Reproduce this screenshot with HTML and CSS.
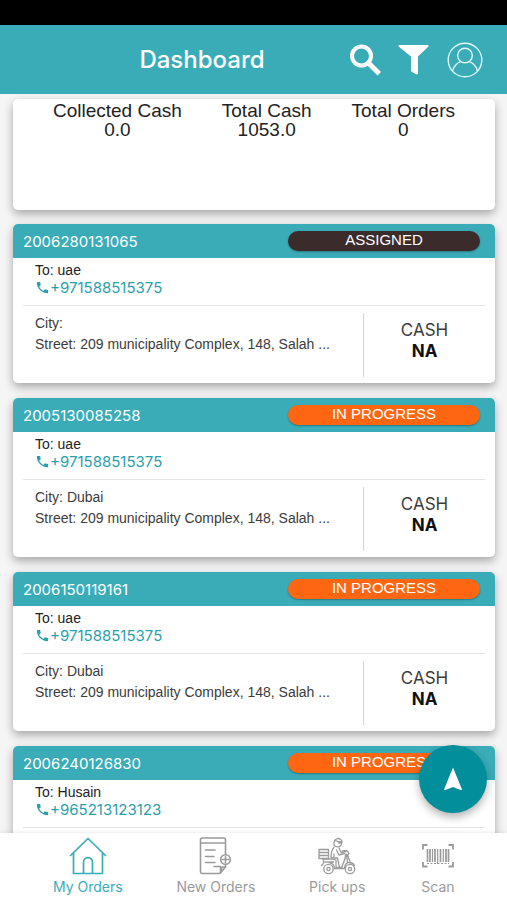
FILE: index.html
```html
<!DOCTYPE html>
<html lang="en">
    <head>
        <meta charset="utf-8">
        <meta name="viewport" content="width=device-width, initial-scale=1">
        <title>Dashboard</title>
        <link rel="stylesheet" href="styles.css">
    </head>
    <body>
        <svg class="symbols" aria-hidden="true">
            <symbol id="phone" viewBox="0 0 24 24">
                <path fill="currentColor" d="M6.6 10.8c1.4 2.8 3.8 5.1 6.6 6.6l2.2-2.2c.3-.3.7-.4 1-.2 1.1.4 2.3.6 3.6.6.6 0 1 .4 1 1V20c0 .6-.4 1-1 1C10.600 21 3 13.400 3 4c0-.6.4-1 1-1h3.500c.6 0 1 .4 1 1 0 1.200.2 2.400.6 3.600.1.300 0 .700-.200 1z"/>
            </symbol>
        </svg>
        <div class="statusBar"></div>
        <header class="topBar">
            <h1 class="title">Dashboard</h1>
            <div class="actions">
                <button type="button" class="iconButton" aria-label="Search">
                    <svg width="32" height="32" viewBox="0 0 32 32" fill="none" stroke="#fff">
                        <circle cx="12.500" cy="12" r="9.500" stroke-width="4"/>
                        <path d="M19.500 19l9 9" stroke-width="5" stroke-linecap="square"/>
                    </svg>
                </button>
                <button type="button" class="iconButton" aria-label="Filter">
                    <svg width="32" height="32" viewBox="0 0 32 32">
                        <path fill="#fff" d="M1.500 1h28c1.200 0 1.500 1 .7 1.800L20 12.500v16.500c0 1.200-.8 1.800-1.800 1.300l-4.500-2.600c-.5-.3-.7-.7-.7-1.200v-14L.8 2.800c-.8-.8-.5-1.800.7-1.800z"/>
                    </svg>
                </button>
                <button type="button" class="iconButton" aria-label="Profile">
                    <svg width="36" height="36" viewBox="0 0 36 36" fill="none" stroke="#dffbff" stroke-width="1.400">
                        <circle cx="18" cy="18" r="16.800"/>
                        <circle cx="18" cy="13.500" r="7.300"/>
                        <path d="M5.500 29C7 23 11.500 20 14 19.600M22 19.600C24.500 20 29 23 30.500 29"/>
                    </svg>
                </button>
            </div>
        </header>
        <div class="content">
            <main class="scroller">
                <section class="card summary">
                    <div>Collected Cash<br>0.0</div>
                    <div>Total Cash<br>1053.0</div>
                    <div>Total Orders<br>0</div>
                </section>
                <article class="card order">
                    <div class="orderHeader">
                        <span>2006280131065</span>
                        <span class="status assigned">ASSIGNED</span>
                    </div>
                    <div class="contact">
                        <div>To: uae</div>
                        <a class="phone" href="tel:+971588515375"><svg width="15" height="15"><use href="#phone"/></svg>+971588515375</a>
                    </div>
                    <div class="details">
                        <div class="address">
                            <div>City:</div>
                            <div>Street: 209 municipality Complex, 148, Salah ...</div>
                        </div>
                        <div class="payment">CASH<br><b>NA</b></div>
                    </div>
                </article>
                <article class="card order">
                    <div class="orderHeader">
                        <span>2005130085258</span>
                        <span class="status">IN PROGRESS</span>
                    </div>
                    <div class="contact">
                        <div>To: uae</div>
                        <a class="phone" href="tel:+971588515375"><svg width="15" height="15"><use href="#phone"/></svg>+971588515375</a>
                    </div>
                    <div class="details">
                        <div class="address">
                            <div>City: Dubai</div>
                            <div>Street: 209 municipality Complex, 148, Salah ...</div>
                        </div>
                        <div class="payment">CASH<br><b>NA</b></div>
                    </div>
                </article>
                <article class="card order">
                    <div class="orderHeader">
                        <span>2006150119161</span>
                        <span class="status">IN PROGRESS</span>
                    </div>
                    <div class="contact">
                        <div>To: uae</div>
                        <a class="phone" href="tel:+971588515375"><svg width="15" height="15"><use href="#phone"/></svg>+971588515375</a>
                    </div>
                    <div class="details">
                        <div class="address">
                            <div>City: Dubai</div>
                            <div>Street: 209 municipality Complex, 148, Salah ...</div>
                        </div>
                        <div class="payment">CASH<br><b>NA</b></div>
                    </div>
                </article>
                <article class="card order">
                    <div class="orderHeader">
                        <span>2006240126830</span>
                        <span class="status">IN PROGRESS</span>
                    </div>
                    <div class="contact">
                        <div>To: Husain</div>
                        <a class="phone" href="tel:+965213123123"><svg width="15" height="15"><use href="#phone"/></svg>+965213123123</a>
                    </div>
                    <div class="details"></div>
                </article>
            </main>
            <button type="button" class="fab" aria-label="Navigate">
                <svg width="20" height="24" viewBox="0 0 20 24">
                    <path fill="#fff" d="M10 .5l9 22-.8.800L10 20l-8.200 3.300-.8-.800z"/>
                </svg>
            </button>
        </div>
        <nav class="tabs">
            <a href="#" class="tab active">
                <svg width="38" height="38" viewBox="0 0 38 38" fill="none" stroke="currentColor" stroke-width="1.700" stroke-linejoin="round" stroke-linecap="round">
                    <path d="M1.500 18.500L19 1.500l17.500 17M4.500 16v20.500h29V16M14.500 36.500V25.500c0-6.500 9-6.500 9 0v11"/>
                </svg>
                My Orders
            </a>
            <a href="#" class="tab">
                <svg width="38" height="38" viewBox="0 0 38 38" fill="none" stroke="currentColor" stroke-width="1.600" stroke-linejoin="round" stroke-linecap="round">
                    <path d="M28.500 17.500V3c0-1.200-.8-2-2-2h-21c-1.200 0-2 .8-2 2v31.500c0 1.200.8 2 2 2h17.500l5.500-6.500v-2.500M3.500 6h25M8.500 13H18M8.500 19.500H17M8.500 25.500H18M17 29.500h6.500v6.500"/>
                    <circle cx="28.500" cy="22.500" r="4.800"/>
                    <path d="M25.500 22.500h6M28.500 19.500v6M23.500 35.500l1.500-5.500h3.500"/>
                </svg>
                New Orders
            </a>
            <a href="#" class="tab">
                <svg width="38" height="38" viewBox="0 0 38 38" fill="none" stroke="currentColor" stroke-width="1.300" stroke-linejoin="round" stroke-linecap="round">
                    <path d="M1 12.500h9.500v9H1zM1 15.500h9.500M1 18.500h9.500"/>
                    <path d="M16 8.500c-1.500-9 8.500-8.500 8 -3l-3.500.5M16 8c1.500 2.500 6 2.500 7.500-.5V5.500M17 3.500c2 1 4 1.500 7 1.500"/>
                    <path d="M16 10.500c-3 2.500-3 6.500-3 10.500h6.500l2 9.500M21 11l2 4.500 5-1M18.500 13l2.500 5 5.500-1.500M16 21v-4"/>
                    <path d="M4.500 22h10l3.500 1v7.500h6c0-5 4-6 3.500-13M5.500 22v4.500l-2 2M7 25h8.500M12 26c3 0 4 2 4.500 5.500h10"/>
                    <path d="M24.500 14l4.500-.500 2 3-1.500 1.500L32.500 26M28.500 17.500l1 8M26.500 31c.5-6.500 7-7 10-2.500"/>
                    <circle cx="10.500" cy="32" r="4.700"/>
                    <circle cx="10.500" cy="32" r="1.600"/>
                    <circle cx="32" cy="32" r="4.700"/>
                    <circle cx="32" cy="32" r="1.600"/>
                </svg>
                Pick ups
            </a>
            <a href="#" class="tab">
                <svg width="38" height="38" viewBox="0 0 38 38" fill="none" stroke="currentColor">
                    <path stroke-width="1.800" d="M4 12.500V8h4.500M29.500 8H34v4.500M34 25v4.500h-4.500M8.500 29.500H4V25"/>
                    <path stroke-width="1.700" d="M8.500 12v13M11 12v13M16 12v13M21.500 12v13M27 12v13M29.500 12v13"/>
                    <path stroke-width="1.200" d="M13.500 12v13M18.700 12v15M24.300 12v13"/>
                    <path stroke-width="1" stroke-dasharray="2 1.500" d="M8 26.500h22"/>
                </svg>
                Scan
            </a>
        </nav>
    </body>
</html>
```

FILE: styles.css
```css
* {
    box-sizing: border-box;
}
body {
    display: flex;
    flex-direction: column;
    height: 100vh;
    margin: 0;
    background-color: #f5f5f5;
    color: #222;
    font-family: "Liberation Sans", Arial, sans-serif;
    font-size: 14px;
}
a {
    color: inherit;
    text-decoration: none;
}
button {
    display: flex;
    align-items: center;
    justify-content: center;
    padding: 0;
    border: none;
    background: none;
    cursor: pointer;
}
.symbols {
    display: none;
}
.statusBar {
    flex: none;
    height: 25px;
    background-color: #000;
}
.topBar {
    display: flex;
    flex: none;
    align-items: center;
    height: 69px;
    padding: 0 24px 0 55px;
    background-color: #3aacb8;
}
.title {
    flex: 1;
    margin: 0;
    color: #fff;
    font-family: Inter, sans-serif;
    font-size: 24px;
    font-weight: 500;
    text-align: center;
}
.actions {
    display: flex;
    align-items: center;
    gap: 17px;
}
.content {
    position: relative;
    flex: 1;
    min-height: 0;
}
.scroller {
    display: flex;
    flex-direction: column;
    gap: 15px;
    height: 100%;
    padding: 5px 12px 0 13px;
    overflow: hidden;
}
.card {
    flex: none;
    border-radius: 5px;
    background-color: #fff;
    box-shadow: 0 4px 10px rgba(0, 0, 0, 0.32);
}
.summary {
    display: flex;
    justify-content: space-evenly;
    height: 111px;
    margin-bottom: -1px;
    padding-top: 2px;
    font-size: 19px;
    line-height: 19px;
    text-align: center;
}
.orderHeader {
    display: flex;
    align-items: center;
    justify-content: space-between;
    height: 34px;
    padding: 0 15px 0 10px;
    border-radius: 5px 5px 0 0;
    background-color: #3aacb8;
    color: #fff;
    font-family: Inter, sans-serif;
    font-size: 15px;
}
.status {
    width: 42%;
    height: 20px;
    border-radius: 10px;
    background-color: #ff6611;
    box-shadow: 0 1px 2px rgba(0, 0, 0, 0.3);
    font-family: "Liberation Sans", Arial, sans-serif;
    line-height: 17px;
    text-align: center;
}
.assigned {
    background-color: #3b2b2b;
}
.contact {
    height: 48px;
    margin: 0 10px;
    padding: 4px 12px 0;
    border-bottom: 1px solid #e4e4e4;
    line-height: 17px;
}
.phone {
    display: flex;
    align-items: center;
    color: #2a9fab;
    font-family: Inter, sans-serif;
    font-size: 15px;
}
.details {
    display: flex;
    height: 77px;
    padding: 7px 10px 6px 22px;
    color: #3c3c3c;
    line-height: 21px;
}
.address {
    flex: 1;
    min-width: 0;
    overflow: hidden;
    white-space: nowrap;
}
.payment {
    width: 122px;
    padding-top: 7px;
    border-left: 1px solid #d4d4d4;
    font-family: Inter, sans-serif;
    font-size: 17px;
    text-align: center;
}
.payment b {
    color: #111;
}
.fab {
    position: absolute;
    right: 20px;
    bottom: 20px;
    width: 68px;
    height: 68px;
    border-radius: 50%;
    background-color: #038e9b;
    box-shadow: 0 4px 8px rgba(0, 0, 0, 0.3);
}
.tabs {
    z-index: 1;
    display: flex;
    flex: none;
    justify-content: space-between;
    height: 67px;
    padding: 4px 50px 0 53px;
    background-color: #fff;
    box-shadow: 0 -1px 4px rgba(0, 0, 0, 0.08);
}
.tab {
    display: flex;
    flex-direction: column;
    align-items: center;
    gap: 3px;
    color: #9b9b9b;
    font-family: Inter, sans-serif;
    font-size: 14px;
    line-height: 17px;
}
.active {
    color: #3aacb8;
}
```
